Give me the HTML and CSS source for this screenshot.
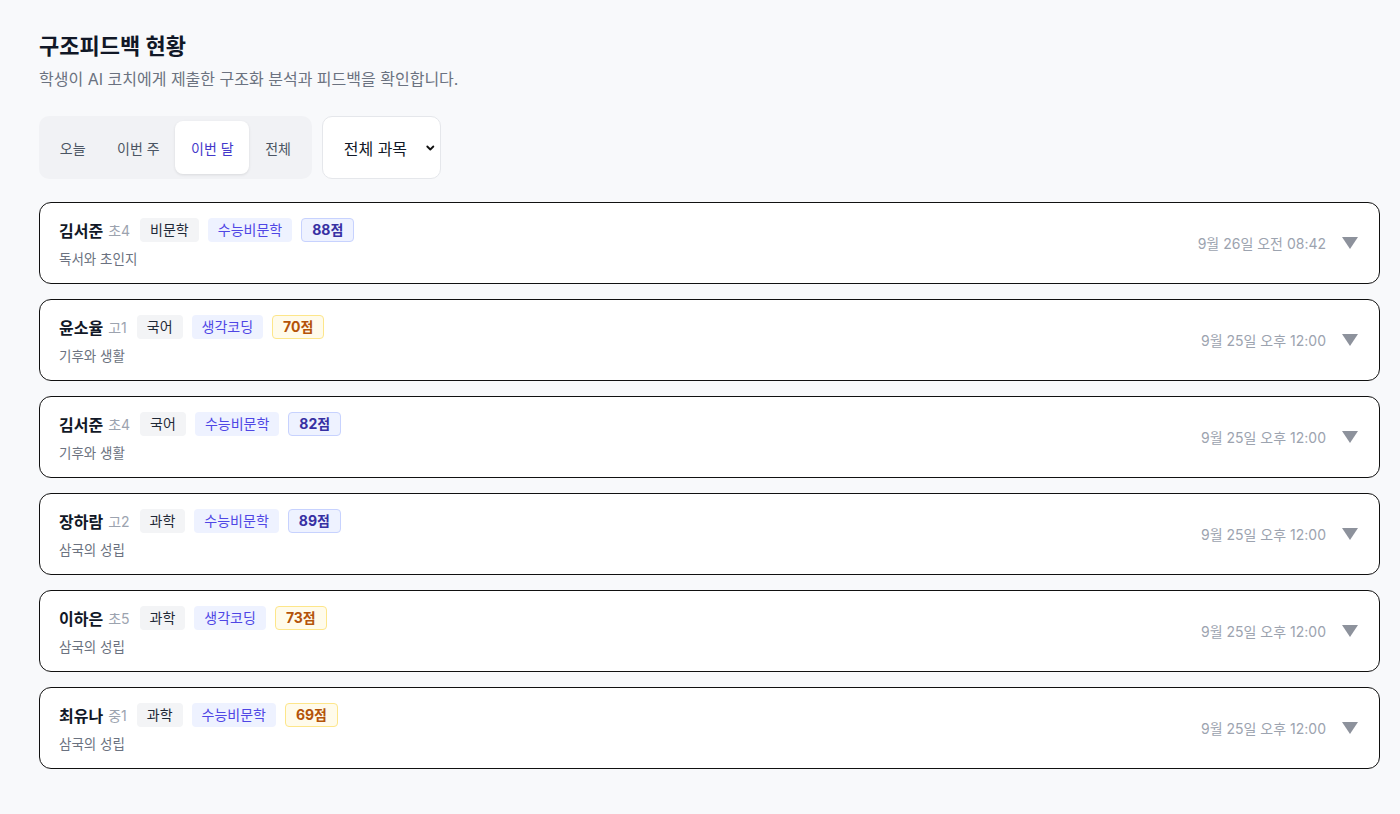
FILE: index.html
```html
<!DOCTYPE html>
<html lang="ko">
<head>
    <meta charset="UTF-8">
    <meta name="viewport" content="width=device-width, initial-scale=1.0">
    <title>구조피드백 현황</title>
    <link rel="stylesheet" href="styles.css">
</head>
<body>

    <div class="page">
        <h1>구조피드백 현황</h1>
        <p class="desc">학생이 AI 코치에게 제출한 구조화 분석과 피드백을 확인합니다.</p>

        <div class="filters">
            <div class="tabs">
                <button class="tab">오늘</button>
                <button class="tab">이번 주</button>
                <button class="tab active">이번 달</button>
                <button class="tab">전체</button>
            </div>
            <div class="select">
                <span>전체 과목</span>
                <svg width="14" height="14" viewBox="0 0 14 14"><path d="M3 5 7 9 11 5" fill="none" stroke="#111" stroke-width="2.4" stroke-linecap="round" stroke-linejoin="round"/></svg>
            </div>
        </div>

        <div class="list">
            <div class="card">
                <div class="info">
                    <div class="top">
                        <span class="name">김서준</span><span class="grade">초4</span>
                        <span class="chip">비문학</span>
                        <span class="chip blue">수능비문학</span>
                        <span class="score">88점</span>
                    </div>
                    <div class="topic">독서와 초인지</div>
                </div>
                <div class="meta"><span class="date">9월 26일 오전 08:42</span><span class="arrow"></span></div>
            </div>

            <div class="card">
                <div class="info">
                    <div class="top">
                        <span class="name">윤소율</span><span class="grade">고1</span>
                        <span class="chip">국어</span>
                        <span class="chip blue">생각코딩</span>
                        <span class="score warn">70점</span>
                    </div>
                    <div class="topic">기후와 생활</div>
                </div>
                <div class="meta"><span class="date">9월 25일 오후 12:00</span><span class="arrow"></span></div>
            </div>

            <div class="card">
                <div class="info">
                    <div class="top">
                        <span class="name">김서준</span><span class="grade">초4</span>
                        <span class="chip">국어</span>
                        <span class="chip blue">수능비문학</span>
                        <span class="score">82점</span>
                    </div>
                    <div class="topic">기후와 생활</div>
                </div>
                <div class="meta"><span class="date">9월 25일 오후 12:00</span><span class="arrow"></span></div>
            </div>

            <div class="card">
                <div class="info">
                    <div class="top">
                        <span class="name">장하람</span><span class="grade">고2</span>
                        <span class="chip">과학</span>
                        <span class="chip blue">수능비문학</span>
                        <span class="score">89점</span>
                    </div>
                    <div class="topic">삼국의 성립</div>
                </div>
                <div class="meta"><span class="date">9월 25일 오후 12:00</span><span class="arrow"></span></div>
            </div>

            <div class="card">
                <div class="info">
                    <div class="top">
                        <span class="name">이하은</span><span class="grade">초5</span>
                        <span class="chip">과학</span>
                        <span class="chip blue">생각코딩</span>
                        <span class="score warn">73점</span>
                    </div>
                    <div class="topic">삼국의 성립</div>
                </div>
                <div class="meta"><span class="date">9월 25일 오후 12:00</span><span class="arrow"></span></div>
            </div>

            <div class="card">
                <div class="info">
                    <div class="top">
                        <span class="name">최유나</span><span class="grade">중1</span>
                        <span class="chip">과학</span>
                        <span class="chip blue">수능비문학</span>
                        <span class="score warn">69점</span>
                    </div>
                    <div class="topic">삼국의 성립</div>
                </div>
                <div class="meta"><span class="date">9월 25일 오후 12:00</span><span class="arrow"></span></div>
            </div>
        </div>
    </div>

</body>
</html>
```

FILE: styles.css
```css
body {
    font-family: Inter, "Noto Sans CJK KR", sans-serif;
    margin: 0;
    background-color: #f8f9fb;
    color: #111827;
}
.page {
    padding: 30px 20px 40px 39px;
}
h1 {
    margin: 0;
    font-size: 22px;
    font-weight: 700;
    line-height: 32px;
}
.desc {
    margin: 5px 0 0;
    font-size: 16px;
    line-height: 24px;
    color: #6b7280;
}
.filters {
    display: flex;
    gap: 10px;
    margin-top: 25px;
}
.tabs {
    display: flex;
    padding: 5px;
    background-color: #f1f2f5;
    border-radius: 10px;
}
.tab {
    font-family: inherit;
    font-size: 14px;
    color: #4b5563;
    background: none;
    border: none;
    border-radius: 8px;
    height: 53px;
    padding: 0 15.75px;
    cursor: pointer;
}
.tab.active {
    background-color: #fff;
    color: #4338ca;
    box-shadow: 0 1px 3px rgba(0, 0, 0, 0.1);
}
.select {
    display: flex;
    align-items: center;
    gap: 18px;
    height: 63px;
    padding: 0 4px 0 21px;
    background-color: #fff;
    border: 1px solid #e5e7eb;
    border-radius: 10px;
    font-size: 16px;
    white-space: nowrap;
    box-sizing: border-box;
    width: 119px;
}
.list {
    display: flex;
    flex-direction: column;
    gap: 15px;
    margin-top: 23px;
}
.card {
    display: flex;
    align-items: center;
    justify-content: space-between;
    height: 82px;
    box-sizing: border-box;
    padding: 0 21px 0 19px;
    background-color: #fff;
    border: 1px solid #111;
    border-radius: 12px;
}
.top {
    display: flex;
    align-items: center;
}
.name {
    font-size: 16px;
    font-weight: 600;
}
.grade {
    font-size: 14px;
    color: #9ca3af;
    margin-left: 5px;
    margin-right: 10px;
}
.chip {
    font-size: 14px;
    line-height: 24px;
    padding: 0 10px;
    border-radius: 4px;
    background-color: #f3f4f6;
    color: #1f2937;
    margin-right: 9px;
}
.chip.blue {
    background-color: #eef2ff;
    color: #4f46e5;
}
.score {
    font-size: 14px;
    font-weight: 700;
    line-height: 22px;
    padding: 0 10px;
    border-radius: 4px;
    background-color: #eef2ff;
    border: 1px solid #c7d2fe;
    color: #3730a3;
}
.score.warn {
    background-color: #fffbeb;
    border-color: #fde68a;
    color: #b45309;
}
.topic {
    margin-top: 6px;
    font-size: 13.5px;
    color: #6b7280;
}
.meta {
    display: flex;
    align-items: center;
    gap: 16px;
}
.date {
    font-size: 14px;
    color: #9ca3af;
}
.arrow {
    width: 0;
    height: 0;
    border-left: 8px solid transparent;
    border-right: 8px solid transparent;
    border-top: 12px solid #8d929c;
}
```
